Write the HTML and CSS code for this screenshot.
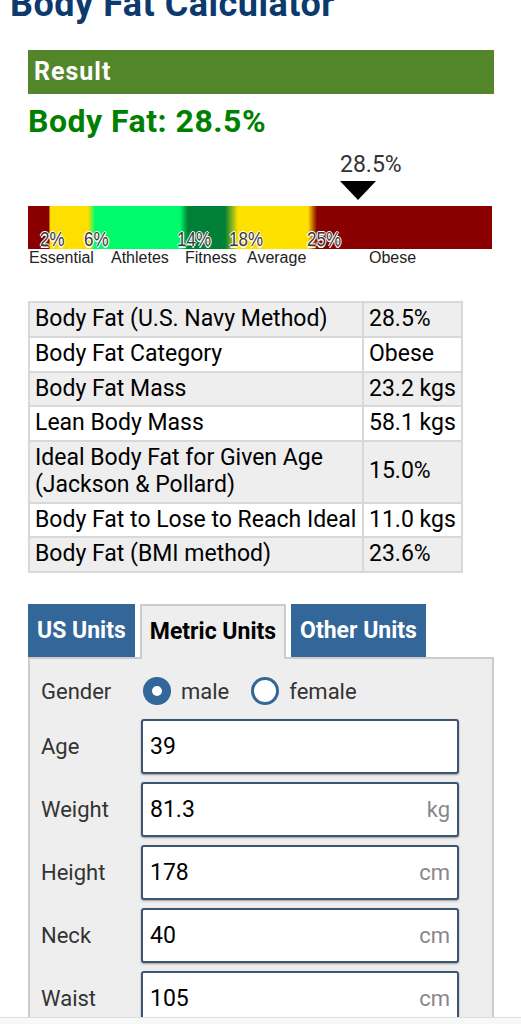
FILE: index.html
```html
<!DOCTYPE html>
<html lang="en">
<head>
    <meta charset="UTF-8">
    <meta name="viewport" content="width=device-width, initial-scale=1.0">
    <link rel="stylesheet" href="styles.css">
    <title>Body Fat Calculator</title>
</head>
<body>

<h1 class="title">Body Fat Calculator</h1>

<div class="content">
    <h2 class="result-head">Result</h2>
    <div class="big-result">Body Fat: 28.5%</div>

    <div class="scale">
        <div class="marker" style="margin-left: 312px;">
            <div class="marker-value">28.5%</div>
            <div class="marker-arrow"></div>
        </div>
        <div class="scale-bar">
            <span class="pct" style="left: 12px;">2%</span>
            <span class="pct" style="left: 56px;">6%</span>
            <span class="pct" style="left: 149px;">14%</span>
            <span class="pct" style="left: 201px;">18%</span>
            <span class="pct" style="left: 279px;">25%</span>
        </div>
        <div class="scale-names">
            <span style="left: 1px;">Essential</span>
            <span style="left: 83px;">Athletes</span>
            <span style="left: 157px;">Fitness</span>
            <span style="left: 219px;">Average</span>
            <span style="left: 341px;">Obese</span>
        </div>
    </div>

    <table class="result-table">
        <colgroup>
            <col class="col-name">
            <col class="col-value">
        </colgroup>
        <tr><td>Body Fat (U.S. Navy Method)</td><td>28.5%</td></tr>
        <tr><td>Body Fat Category</td><td>Obese</td></tr>
        <tr><td>Body Fat Mass</td><td>23.2 kgs</td></tr>
        <tr><td>Lean Body Mass</td><td>58.1 kgs</td></tr>
        <tr><td>Ideal Body Fat for Given Age<br>(Jackson &amp; Pollard)</td><td>15.0%</td></tr>
        <tr><td>Body Fat to Lose to Reach Ideal</td><td>11.0 kgs</td></tr>
        <tr><td>Body Fat (BMI method)</td><td>23.6%</td></tr>
    </table>

    <div class="tabs">
        <div class="tab">US Units</div>
        <div class="tab active">Metric Units</div>
        <div class="tab">Other Units</div>
    </div>

    <div class="panel">
        <div class="row gender-row">
            <div class="label">Gender</div>
            <div class="options">
                <span class="radio checked"></span><span class="option-text">male</span>
                <span class="radio"></span><span class="option-text">female</span>
            </div>
        </div>
        <div class="rows">
            <div class="row">
                <div class="label">Age</div>
                <div class="field"><input type="text" value="39"></div>
            </div>
            <div class="row">
                <div class="label">Weight</div>
                <div class="field"><input type="text" value="81.3"><span class="unit">kg</span></div>
            </div>
            <div class="row">
                <div class="label">Height</div>
                <div class="field"><input type="text" value="178"><span class="unit">cm</span></div>
            </div>
            <div class="row">
                <div class="label">Neck</div>
                <div class="field"><input type="text" value="40"><span class="unit">cm</span></div>
            </div>
            <div class="row">
                <div class="label">Waist</div>
                <div class="field"><input type="text" value="105"><span class="unit">cm</span></div>
            </div>
        </div>
    </div>
</div>

<div class="bottom-bar"></div>

</body>
</html>
```

FILE: styles.css
```css
body {
    margin: 0;
    font-family: Roboto, "Noto Sans", sans-serif;
    color: #000;
    background: #fff;
    overflow: hidden;
}

.title {
    margin: -16px 0 26px 10px;
    font-size: 36px;
    line-height: 40px;
    letter-spacing: 0.5px;
    font-weight: bold;
    color: #0c3a6f;
}

.content {
    width: 466px;
    margin-left: 28px;
}

.result-head {
    margin: 0;
    height: 44px;
    line-height: 44px;
    padding-left: 6px;
    background-color: #538629;
    color: #fff;
    font-size: 25px;
    letter-spacing: 1px;
    font-weight: bold;
}

.big-result {
    margin-top: 9px;
    font-size: 32px;
    line-height: 36px;
    letter-spacing: 0.5px;
    font-weight: bold;
    color: #008000;
}

/* barra de categorias */
.scale {
    width: 464px;
    margin-top: 13px;
}

.marker-value {
    font-size: 23px;
    line-height: 26px;
    color: #333;
}

.marker-arrow {
    margin-top: 3px;
    width: 0;
    height: 0;
    border-left: 18px solid transparent;
    border-right: 18px solid transparent;
    border-top: 19px solid #000;
}

.scale-bar {
    position: relative;
    height: 43px;
    margin-top: 6px;
    background: linear-gradient(to right,
        #8a0000 0, #8a0000 21px,
        #ffdf00 22px, #ffdf00 60px,
        #00fa6c 67px, #00fa6c 152px,
        #007f36 160px, #007f36 197px,
        #ffe100 210px, #ffe100 280px,
        #8a0000 289px, #8a0000 100%);
}

.pct {
    position: absolute;
    bottom: -1px;
    font-family: "Liberation Sans", Arial, sans-serif;
    font-size: 17px;
    line-height: 17px;
    color: #3a3a3a;
    transform: scaleY(1.2);
    transform-origin: bottom;
    text-shadow: 1px 0 #fff, -1px 0 #fff, 0 1px #fff, 0 -1px #fff;
}

.scale-names {
    position: relative;
    height: 16px;
    margin-top: 1px;
    font-family: "Liberation Sans", Arial, sans-serif;
    font-size: 16px;
    line-height: 16px;
    color: #222;
}

.scale-names span {
    position: absolute;
    top: 0;
}

/* tabla */
.result-table {
    width: 433px;
    margin-top: 35px;
    border-collapse: collapse;
    table-layout: fixed;
    font-size: 23px;
    line-height: 26.75px;
}

.col-name {
    width: 334px;
}

.col-value {
    width: 99px;
}

.result-table td {
    padding: 3px 4px 3px 5px;
    border: 2px solid #d8d8d8;
    white-space: nowrap;
    overflow: hidden;
}

.result-table tr:nth-child(odd) {
    background-color: #eee;
}

/* pestañas */
.tabs {
    display: flex;
    align-items: flex-end;
    gap: 5px;
    margin-top: 31px;
}

.tab {
    height: 53px;
    line-height: 53px;
    padding: 0 9px;
    background-color: #336699;
    color: #fff;
    font-size: 23px;
    font-weight: bold;
}

.tab.active {
    position: relative;
    z-index: 1;
    height: 51px;
    line-height: 51px;
    padding: 0 8px 2px;
    margin-bottom: -2px;
    background-color: #eee;
    color: #000;
    border: 2px solid #ccc;
    border-bottom: 0;
}

.panel {
    min-height: 400px;
    padding: 10px 32px 0 11px;
    background-color: #eee;
    border: 2px solid #ccc;
}

.row {
    display: flex;
    align-items: center;
}

.gender-row {
    height: 44px;
}

.label {
    width: 100px;
    flex-shrink: 0;
    font-size: 22px;
    color: #333;
}

.options {
    display: flex;
    align-items: center;
}

.radio {
    box-sizing: border-box;
    width: 28px;
    height: 28px;
    border-radius: 50%;
    border: 3px solid #336699;
    background-color: #fff;
    margin-left: 2px;
}

.radio.checked {
    border-width: 9px;
}

.option-text {
    margin: 0 20px 0 10px;
    font-size: 22px;
    color: #333;
}

.rows {
    display: flex;
    flex-direction: column;
    gap: 8px;
    margin-top: 6px;
}

.field {
    box-sizing: border-box;
    display: flex;
    align-items: center;
    width: 318px;
    height: 55px;
    padding: 0 7px;
    background-color: #fff;
    border: 2px solid #3b5573;
    border-radius: 3px;
    box-shadow: 0 1px 2px rgba(0, 0, 0, 0.35);
}

.field input {
    flex: 1;
    min-width: 0;
    padding: 0;
    border: 0;
    outline: 0;
    background: transparent;
    font-family: Roboto, "Noto Sans", sans-serif;
    font-size: 23px;
    color: #000;
}

.unit {
    font-size: 22px;
    color: #888;
}

.bottom-bar {
    position: fixed;
    left: 0;
    right: 0;
    bottom: 0;
    height: 6px;
    background-color: #f8f8f8;
    border-top: 1px solid #ddd;
}
```
